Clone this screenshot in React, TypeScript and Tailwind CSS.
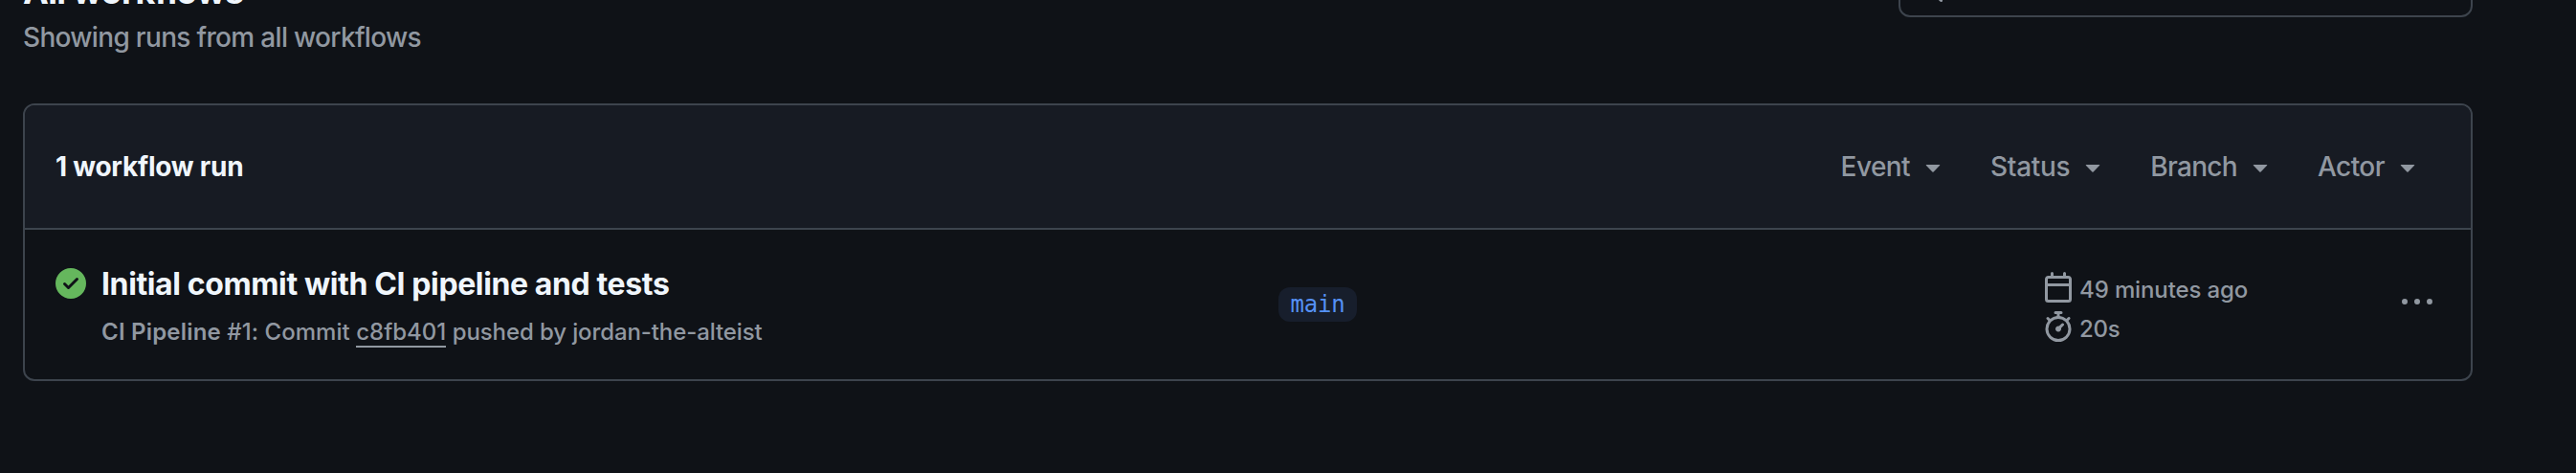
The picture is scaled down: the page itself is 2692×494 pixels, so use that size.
import React from "react";

const FILTERS = [
  { label: "Event", className: "tracking-[-0.58px]" },
  { label: "Status", className: "tracking-[-0.3px]" },
  { label: "Branch", className: "tracking-[-0.7px]" },
  { label: "Actor", className: "tracking-[-0.55px]" },
];

function Icon({ d, className }: { d: string; className?: string }) {
  return (
    <svg viewBox="0 0 16 16" className={`size-8 shrink-0 fill-current ${className ?? ""}`} aria-hidden="true">
      <path d={d} />
    </svg>
  );
}

const SEARCH =
  "M10.68 11.74a6 6 0 0 1-7.922-8.982 6 6 0 0 1 8.982 7.922l3.04 3.04a.749.749 0 0 1-.326 1.275.749.749 0 0 1-.734-.215ZM11.5 7a4.499 4.499 0 1 0-8.997 0A4.499 4.499 0 0 0 11.5 7Z";
const TRIANGLE_DOWN =
  "m4.427 7.427 3.396 3.396a.25.25 0 0 0 .354 0l3.396-3.396A.25.25 0 0 0 11.396 7H4.604a.25.25 0 0 0-.177.427Z";
const CHECK_CIRCLE =
  "M8 16A8 8 0 1 1 8 0a8 8 0 0 1 0 16Zm3.78-9.72a.751.751 0 0 0-.018-1.042.751.751 0 0 0-1.042-.018L6.75 9.19 5.28 7.72a.751.751 0 0 0-1.042.018.751.751 0 0 0-.018 1.042l2 2a.75.75 0 0 0 1.06 0Z";
const CALENDAR =
  "M4.75 0a.75.75 0 0 1 .75.75V2h5V.75a.75.75 0 0 1 1.5 0V2h1.25c.966 0 1.75.784 1.75 1.75v10.5A1.75 1.75 0 0 1 13.25 16H2.75A1.75 1.75 0 0 1 1 14.25V3.75C1 2.784 1.784 2 2.75 2H4V.75A.75.75 0 0 1 4.75 0ZM2.5 7.5v6.75c0 .138.112.25.25.25h10.5a.25.25 0 0 0 .25-.25V7.5Zm10.75-4H2.75a.25.25 0 0 0-.25.25V6h11V3.75a.25.25 0 0 0-.25-.25Z";
const STOPWATCH =
  "M5.75.75A.75.75 0 0 1 6.5 0h3a.75.75 0 0 1 0 1.5h-.75v1l-.001.041a6.724 6.724 0 0 1 3.464 1.435l.007-.006.75-.75a.749.749 0 0 1 1.275.326.749.749 0 0 1-.215.734l-.75.75-.006.007a6.75 6.75 0 1 1-10.548 0L2.72 5.03l-.75-.75a.751.751 0 0 1 .018-1.042.751.751 0 0 1 1.042-.018l.75.75.007.006A6.72 6.72 0 0 1 7.25 2.541V1.5H6.5a.75.75 0 0 1-.75-.75ZM8 14.5a5.25 5.25 0 1 0-.001-10.501A5.25 5.25 0 0 0 8 14.5Zm.389-6.7 1.33-1.33a.75.75 0 1 1 1.061 1.06L9.45 8.861A1.503 1.503 0 0 1 8 10.75a1.499 1.499 0 1 1 .389-2.95Z";
const KEBAB =
  "M8 9a1.5 1.5 0 1 0 0-3 1.5 1.5 0 0 0 0 3ZM1.5 9a1.5 1.5 0 1 0 0-3 1.5 1.5 0 0 0 0 3Zm13 0a1.5 1.5 0 1 0 0-3 1.5 1.5 0 0 0 0 3Z";

export default function App() {
  return (
    <div className="h-[494px] w-[2692px] overflow-hidden bg-[#0f1217] font-['Inter','Liberation_Sans',sans-serif] font-[450] text-[#9198a1]">
      <main className="-mt-[46px] ml-6 w-[2560px]">
        <header className="flex h-[154px] items-start justify-between">
          <div className="pt-3">
            <h1 className="text-[36px] leading-[50px] font-[650] tracking-[-0.7px] text-[#f0f6fc]">All workflows</h1>
            <p className="mt-[3px] text-[28px] leading-10 tracking-[-0.68px]">Showing runs from all workflows</p>
          </div>
          <div className="flex h-16 w-[600px] items-center rounded-xl border-2 border-[#3d444d] pt-1 pl-[14px]">
            <Icon d={SEARCH} />
          </div>
        </header>

        <section className="rounded-xl border-2 border-[#3d444d]">
          <div className="flex h-[130px] items-center justify-between rounded-t-[10px] border-b-2 border-[#3d444d] bg-[#171b23] pr-[50px] pl-8">
            <strong className="text-[28px] leading-10 font-[650] tracking-[-0.23px] text-[#f0f6fc]">1 workflow run</strong>
            <div className="flex items-center gap-11">
              {FILTERS.map((f) => (
                <div key={f.label} className="flex items-center gap-2">
                  <span className={`text-[28px] leading-10 ${f.className}`}>{f.label}</span>
                  <Icon d={TRIANGLE_DOWN} />
                </div>
              ))}
            </div>
          </div>

          <div className="flex h-[156px] items-start pr-10 pl-8">
            <Icon d={CHECK_CIRCLE} className="mt-10 text-[#65b75d]" />
            <div className="w-[1246px] pt-[37px] pl-4">
              <h2 className="text-[32px] leading-10 font-[650] tracking-[-0.38px] text-[#f0f6fc]">
                Initial commit with CI pipeline and tests
              </h2>
              <p className="mt-3 text-[24px] leading-9">
                <b className="font-semibold tracking-[0.2px]">CI Pipeline</b>{" "}
                <span className="tracking-[0.05px]">#1: Commit</span>{" "}
                <span className="inline-block h-[34px] border-b-2 border-current">c8fb401</span>{" "}
                <span className="tracking-[-0.11px]">pushed by jordan-the-alteist</span>
              </p>
            </div>
            <div className="mt-[60px] flex h-9 w-[82px] items-center justify-center rounded-xl bg-[#171e2c] pb-px font-['DejaVu_Sans_Mono',monospace] text-[24px] font-normal tracking-[-0.2px] text-[#5591f6]">
              main
            </div>
            <div className="mt-11 ml-[717px] w-[375px] text-[24px]">
              <div className="flex h-[41px] items-start gap-[6px]">
                <Icon d={CALENDAR} />
                <span className="pt-px leading-9 tracking-[-0.12px]">49 minutes ago</span>
              </div>
              <div className="flex items-start gap-[6px]">
                <Icon d={STOPWATCH} />
                <span className="pt-px leading-9 tracking-[-0.3px]">20s</span>
              </div>
            </div>
            <Icon d={KEBAB} className="mt-[60px]" />
          </div>
        </section>
      </main>
    </div>
  );
}
